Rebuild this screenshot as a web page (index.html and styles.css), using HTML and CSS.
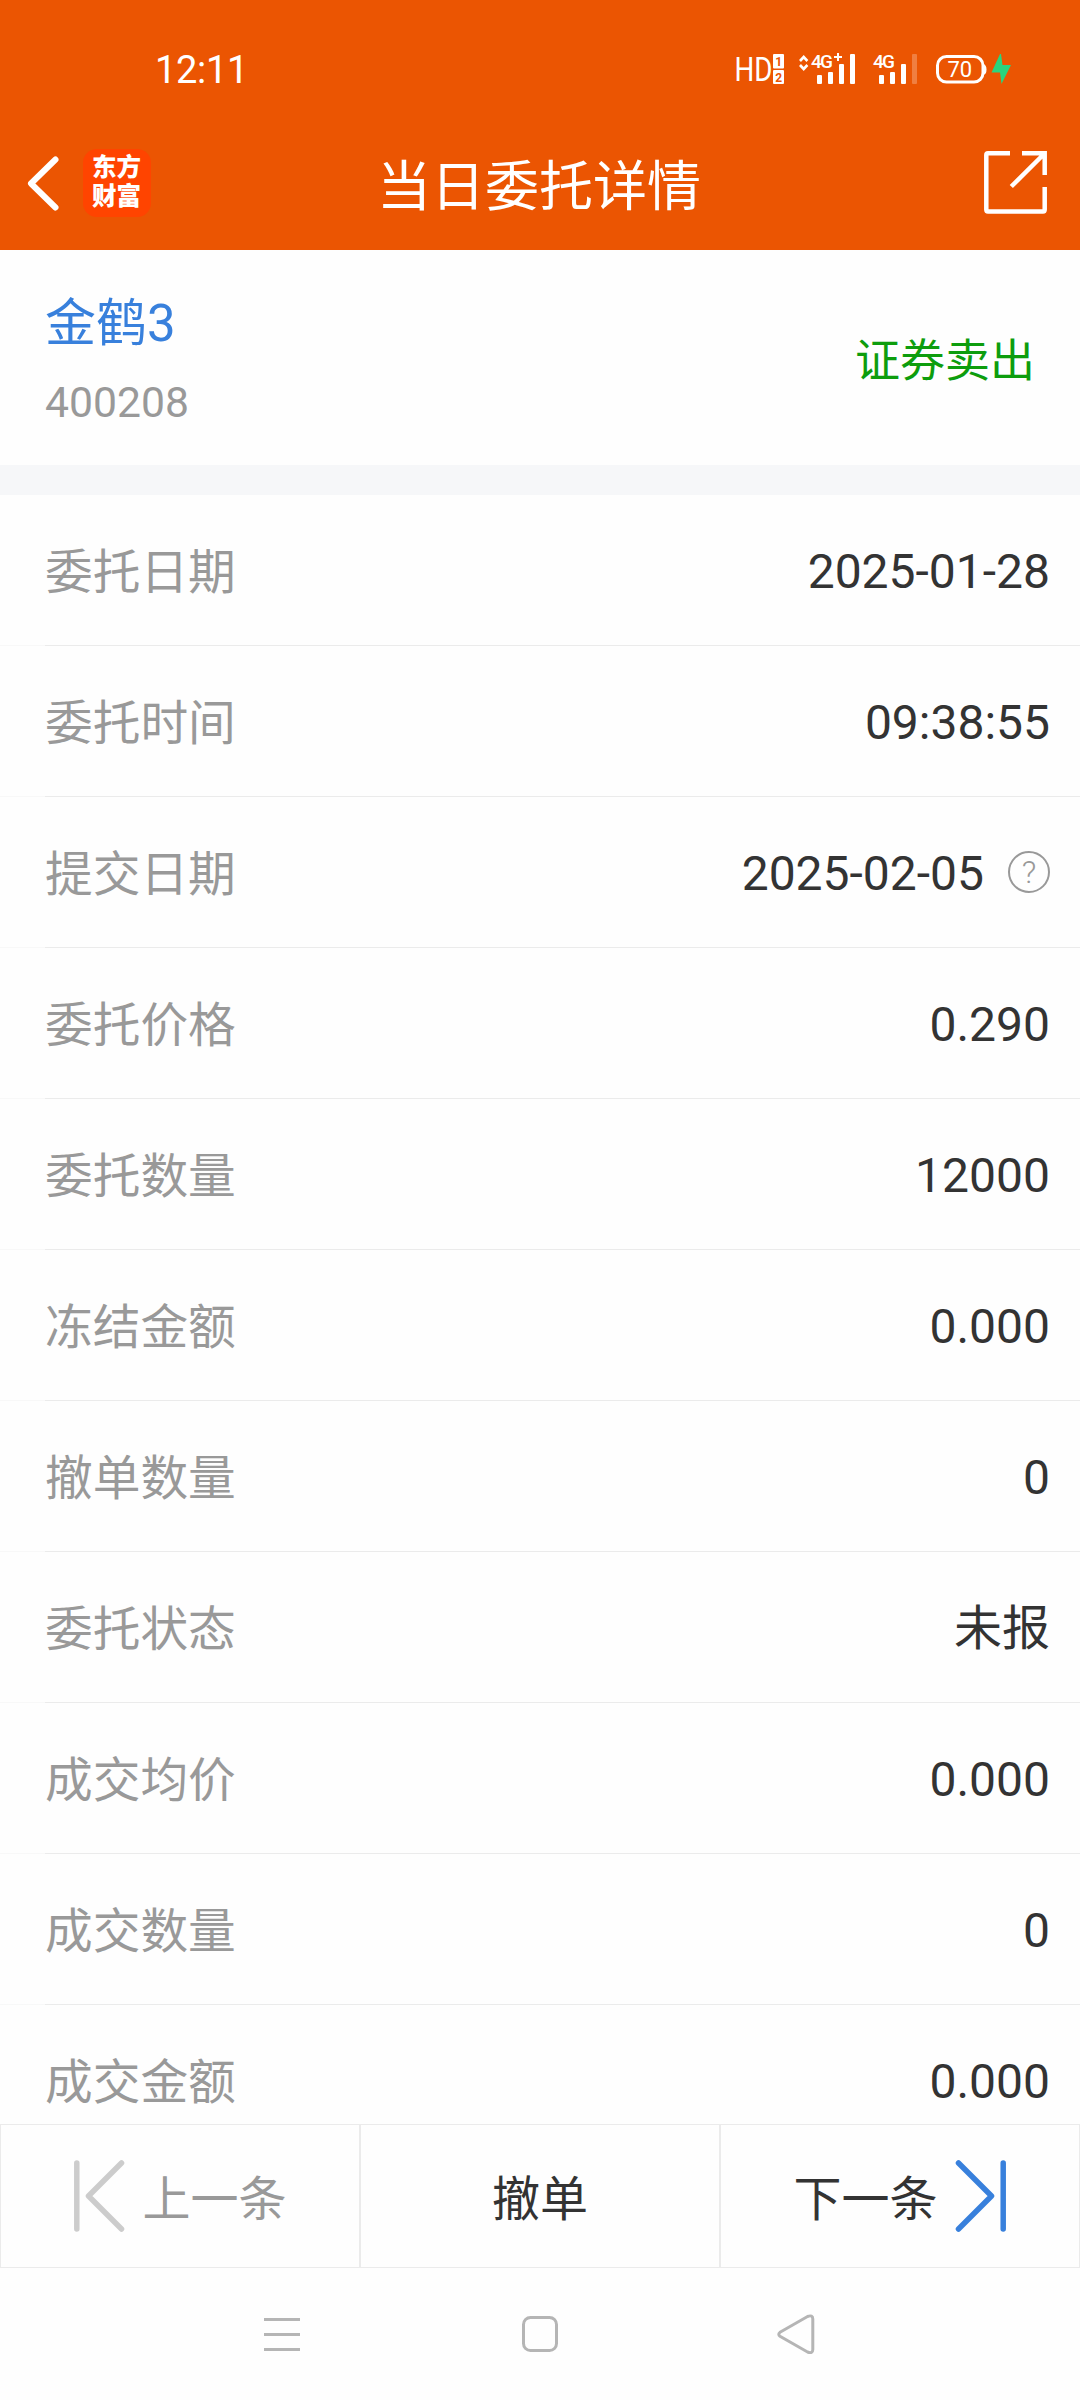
FILE: index.html
```html
<!DOCTYPE html>
<html lang="zh-CN">
<head>
<meta charset="utf-8">
<title>当日委托详情</title>
<link rel="stylesheet" href="styles.css">
</head>
<body>
<div class="screen">
  <header class="header">
    <div class="status">
      <span class="clock">12:11</span>
      <svg class="status-icons" width="288" height="40" viewBox="732 50 288 40" fill="#fff">
        <text class="hd" x="734.5" y="81" textLength="38" lengthAdjust="spacingAndGlyphs">HD</text>
        <rect x="773" y="54" width="11" height="14.5" rx="1"/>
        <rect x="773" y="70" width="11" height="14" rx="1"/>
        <text class="sim" x="775.2" y="66">1</text>
        <text class="sim" x="775.2" y="82">2</text>
        <path d="M800 61l3.7-4 3.7 4M800 65l3.7 4 3.7-4" fill="none" stroke="#fff" stroke-width="2.6"/>
        <text class="net" x="811" y="67.5" textLength="22">4G</text>
        <path d="M834 57h8M838 53v8" stroke="#fff" stroke-width="2"/>
        <rect x="817" y="75" width="5" height="9" rx="1"/>
        <rect x="828" y="72" width="5" height="12" rx="1"/>
        <rect x="839" y="64" width="5" height="20" rx="1"/>
        <rect x="850" y="54" width="5" height="30" rx="1"/>
        <text class="net" x="873" y="67.5" textLength="22">4G</text>
        <rect x="879" y="75" width="5" height="9" rx="1"/>
        <rect x="890" y="72" width="5" height="12" rx="1"/>
        <rect x="901" y="64" width="5" height="20" rx="1"/>
        <rect x="912" y="54" width="5" height="30" rx="1" opacity=".25"/>
        <rect x="937.5" y="56.5" width="45.5" height="25.5" rx="9" fill="none" stroke="#fff" stroke-width="3"/>
        <path d="M983.5 64q3 1 3 5.500t-3 5.500z"/>
        <text class="charge" x="947.5" y="76.500">70</text>
        <path d="M1000 54L991.500 72.500H1000L1001.500 84L1011 65H1002.500L1001 54Z" fill="#2ad47d"/>
      </svg>
    </div>
    <div class="titlebar">
      <div class="side">
        <svg width="34" height="60" viewBox="26 152 34 60" fill="none" stroke="#fff" stroke-width="6" stroke-linecap="round" stroke-linejoin="round"><path d="M55.500 158.500L31 182.500L55.500 206.500"/></svg>
        <div class="logo"><span>东方</span><span>财富</span></div>
      </div>
      <h1 class="title">当日委托详情</h1>
      <div class="side side-end">
        <svg width="64" height="64" viewBox="984 151 64 64" fill="none" stroke="#fff" stroke-width="4.500"><path d="M1010 153.300H988Q986.300 153.300 986.300 155V209.500Q986.300 211.500 988 211.500H1043Q1044.700 211.500 1044.700 209.500V187M1022 153.300H1044.700V175M1044 154L1011.300 186.500"/></svg>
      </div>
    </div>
  </header>

  <section class="summary">
    <div>
      <div class="name">金鹤3</div>
      <div class="code">400208</div>
    </div>
    <div class="side-label">证券卖出</div>
  </section>

  <main class="rows">
    <div class="row"><span class="label">委托日期</span><span class="value">2025-01-28</span></div>
    <div class="row"><span class="label">委托时间</span><span class="value">09:38:55</span></div>
    <div class="row"><span class="label">提交日期</span><span class="value">2025-02-05</span><span class="help">?</span></div>
    <div class="row"><span class="label">委托价格</span><span class="value">0.290</span></div>
    <div class="row"><span class="label">委托数量</span><span class="value">12000</span></div>
    <div class="row"><span class="label">冻结金额</span><span class="value">0.000</span></div>
    <div class="row"><span class="label">撤单数量</span><span class="value">0</span></div>
    <div class="row"><span class="label">委托状态</span><span class="value">未报</span></div>
    <div class="row"><span class="label">成交均价</span><span class="value">0.000</span></div>
    <div class="row"><span class="label">成交数量</span><span class="value">0</span></div>
    <div class="row"><span class="label">成交金额</span><span class="value">0.000</span></div>
  </main>

  <footer class="actions">
    <div class="action prev">
      <svg width="52" height="72" viewBox="73 2160 52 72" fill="none" stroke="#ccc" stroke-width="5.500" stroke-linecap="round" stroke-linejoin="round"><path d="M76.800 2163V2229M121.500 2163L88.500 2196L121.500 2229"/></svg>
      <span class="action-text">上一条</span>
    </div>
    <div class="action"><span class="action-text">撤单</span></div>
    <div class="action next">
      <span class="action-text">下一条</span>
      <svg width="52" height="72" viewBox="955 2160 52 72" fill="none" stroke="#3880dc" stroke-width="5.500" stroke-linecap="round" stroke-linejoin="round"><path d="M1003.200 2163V2229M958.500 2163L991.500 2196L958.500 2229"/></svg>
    </div>
  </footer>

  <nav class="sysnav">
    <svg width="40" height="44" viewBox="262 2312 40 44" fill="none" stroke="#b5b5b5" stroke-width="3"><path d="M264 2319.500H300M264 2334.500H300M264 2349.500H300"/></svg>
    <svg width="40" height="44" viewBox="519 2312 40 44" fill="none" stroke="#b5b5b5" stroke-width="3"><rect x="523.500" y="2317.500" width="33" height="33" rx="7"/></svg>
    <svg width="40" height="44" viewBox="776 2312 40 44" fill="none" stroke="#b5b5b5" stroke-width="3"><path d="M780 2332.300L807.500 2316.500Q812.800 2314.500 812.800 2319V2349.500Q812.800 2354 807.500 2352L780 2336.300Q777.500 2334.300 780 2332.300Z"/></svg>
  </nav>
</div>
</body>
</html>
```
FILE: styles.css
```css
* { box-sizing: border-box; }

body {
  margin: 0;
  background: #fefefe;
  color: #333;
  font-family: Roboto, "Noto Sans CJK SC", sans-serif;
}

svg { display: block; flex: none; }

.screen {
  display: flex;
  flex-direction: column;
  width: 1080px;
  height: 2400px;
  overflow: hidden;
}

/* Header */
.header {
  flex: none;
  height: 250px;
  background: #eb5502;
  color: #fff;
}

.status {
  display: flex;
  justify-content: space-between;
  padding: 50px 60px 0 155px;
  height: 115px;
}

.clock {
  font-size: 38px;
  line-height: 40px;
  letter-spacing: -0.3px;
}

.hd { font-size: 33px; font-weight: 400; }
.sim { font-size: 12px; font-weight: 700; fill: #eb5502; }
.net { font-size: 19px; font-weight: 500; }
.charge { font-size: 22px; }

.titlebar {
  display: flex;
  align-items: center;
  height: 135px;
  padding: 0 32px 0 26px;
}

.side {
  display: flex;
  flex: 1;
  align-items: center;
  gap: 23px;
}

.side-end { justify-content: flex-end; }

.logo {
  display: flex;
  flex-direction: column;
  justify-content: center;
  align-items: center;
  width: 68px;
  height: 68px;
  padding: 0 1px 5px 0;
  border-radius: 14px;
  background: #ff4400;
  font: 900 24.5px/29px "Noto Sans CJK SC", sans-serif;
}

.title {
  margin: 0;
  padding: 10px 0 0 4px;
  font-size: 54px;
  font-weight: 400;
  line-height: 80px;
}

/* Security summary */
.summary {
  display: flex;
  flex: none;
  align-items: center;
  justify-content: space-between;
  height: 245px;
  padding: 0 45px;
  border-bottom: 30px solid #f6f7f9;
}

.name {
  padding-top: 10px;
  font-size: 51px;
  line-height: 80px;
  color: #3880dc;
}

.code {
  font-size: 42.7px;
  line-height: 77px;
  color: #999;
}

.side-label {
  font-size: 45px;
  color: #0d9d0d;
}

/* Detail rows */
.rows {
  flex: 1;
  min-height: 0;
  overflow: hidden;
}

.row {
  display: flex;
  align-items: center;
  height: 151px;
  padding: 2px 30px 0 45px;
  font-size: 48px;
  line-height: 72px;
  background: linear-gradient(to right, #f8f8f8 45px, #ebebeb 45px) bottom / 100% 1px no-repeat;
}

.label {
  padding-top: 2px;
  font-size: 47.7px;
  color: #999;
}

.value { margin-left: auto; }

.help {
  width: 42px;
  height: 42px;
  margin: -3px 0 0 24px;
  border: 2px solid #999;
  border-radius: 50%;
  color: #999;
  font-size: 32px;
  font-weight: 300;
  line-height: 38px;
  text-align: center;
}

/* Bottom actions */
.actions {
  display: grid;
  flex: none;
  grid-template-columns: repeat(3, 1fr);
  height: 144px;
  font-size: 48px;
}

.action {
  display: flex;
  align-items: center;
  justify-content: center;
  gap: 17px;
  border: 1px solid #ebebeb;
}

.action-text { padding-bottom: 3px; }

.prev { color: #999; }

/* System navigation */
.sysnav {
  display: flex;
  flex: none;
  align-items: center;
  justify-content: space-between;
  height: 132px;
  padding: 0 264px 0 262px;
}
```
